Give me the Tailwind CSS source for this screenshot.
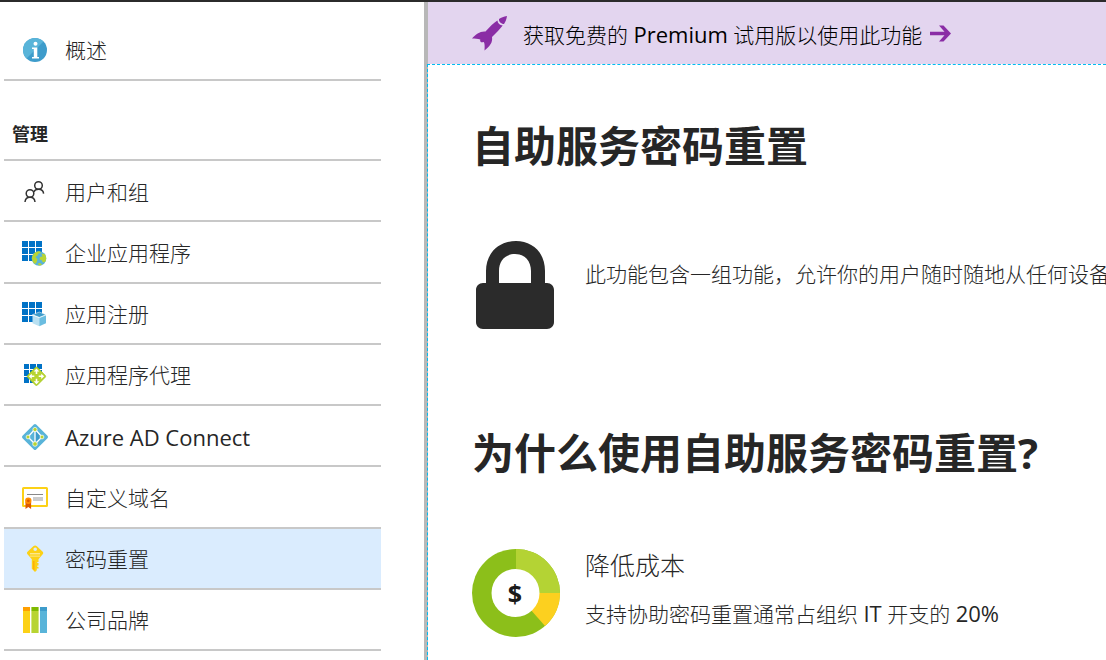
<!DOCTYPE html>
<html lang="zh-CN">
<head>
<meta charset="utf-8">
<meta name="viewport" content="width=device-width, initial-scale=1">
<title>自助服务密码重置</title>
<script src="https://cdn.jsdelivr.net/npm/@tailwindcss/browser@4"></script>
</head>
<body class="flex h-screen flex-col overflow-hidden border-t-2 border-[#2b2b2b] bg-white font-['Open_Sans','Noto_Sans_CJK_SC',sans-serif] text-[21px] leading-7 text-[#262626]">
<div class="flex min-h-0 flex-1">
  <nav aria-label="目录" class="w-[424px] shrink-0 overflow-hidden pl-1 pr-[43px] font-light">
    <a href="#" class="flex h-[79px] items-center gap-4 border-b-2 border-[#c8c8c8] pl-[17px] pt-[19px]">
      <svg class="size-7 shrink-0" viewBox="0 0 28 28" aria-hidden="true"><circle cx="14" cy="14" r="12" fill="#3e9ccb"/><path d="M5.500 22.500A12 12 0 0 1 22.500 5.500z" fill="#59b4d9"/><circle cx="14.500" cy="7.700" r="2" fill="#fff"/><path d="M11 11.500h5.300V21H18v1.600h-7V21h1.800v-7.900H11z" fill="#fff"/></svg>
      <span>概述</span>
    </a>
    <h2 class="flex h-20 items-end border-b-2 border-[#c8c8c8] pb-[11px] pl-2 text-lg leading-7 font-bold">管理</h2>
    <ul class="grid min-h-[490px] auto-rows-fr">
      <li class="border-b-2 border-[#c8c8c8]"><a href="#" class="flex h-full items-center gap-4 pl-[17px] pt-0.5">
        <svg class="size-7 shrink-0" viewBox="0 0 28 28" fill="none" stroke="#333" stroke-width="1.500" aria-hidden="true"><circle cx="17.500" cy="7.500" r="3.800"/><circle cx="9" cy="15.500" r="3.800"/><path d="M4 24c.3-3 2.200-4.700 5-4.700s4.700 1.700 5 4.700M12.800 14c.8-1.800 2.500-2.700 4.700-2.700 2.800 0 4.800 1.600 5.100 4.400"/></svg>
        <span>用户和组</span></a></li>
      <li class="border-b-2 border-[#c8c8c8]"><a href="#" class="flex h-full items-center gap-4 pl-[17px] pt-0.5">
        <svg class="size-7 shrink-0" viewBox="0 0 28 28" aria-hidden="true"><path fill="#0072c6" d="M1 2h6v6H1zm7 0h6v6H8zm7 0h6v6h-6zM1 9h6v6H1zm7 0h6v6H8zm7 0h6v6h-6zM1 16h6v6H1zm7 0h6v6H8z"/><circle cx="18" cy="19.500" r="7.300" fill="#59b4d9"/><path fill="#b8d432" d="M12.500 15c2-2.300 4.500-3 6.500-2.500l1 1.500-2.500.5-1 2-2 1.500 2 2.500-1 3-1.500 1.500c-2-1.500-3.500-4-3-7zM20.500 14.500l3.500.8c1.500 2.500 1.600 5 .3 7.500l-2.300.7-1.500-2.500-2-.5.5-2.500 2.500-.5zM17 24.500l2-.5 2 1.500-1.500 1-2-.2z"/></svg>
        <span>企业应用程序</span></a></li>
      <li class="border-b-2 border-[#c8c8c8]"><a href="#" class="flex h-full items-center gap-4 pl-[17px] pt-0.5">
        <svg class="size-7 shrink-0" viewBox="0 0 28 28" aria-hidden="true"><path fill="#0072c6" d="M1 2h6v6H1zm7 0h6v6H8zm7 0h6v6h-6zM1 9h6v6H1zm7 0h6v6H8zm7 0h6v6h-6zM1 16h6v6H1zm7 0h6v6H8z"/><path fill="#3e9ccb" stroke="#fff" stroke-width=".5" d="m18.300 12 6.700 2.700-6.700 2.700-6.800-2.700z"/><path fill="#b9e0f1" d="m11.500 15 6.800 2.700v8.500l-6.800-3z"/><path fill="#6bbde0" d="m25 15-6.700 2.700v8.500l6.700-3z"/><path fill="none" stroke="#fff" stroke-width=".6" d="m11.500 15 6.800 2.700L25 15"/></svg>
        <span>应用注册</span></a></li>
      <li class="border-b-2 border-[#c8c8c8]"><a href="#" class="flex h-full items-center gap-4 pl-[17px] pt-0.5">
        <svg class="size-7 shrink-0" viewBox="0 0 28 28" aria-hidden="true"><path fill="#0072c6" d="M3 3h5v5H3zm6 0h6v5H9zm7 0h5v5h-5zM3 9h5v6H3zm6 0h6v6H9zm7 0h5v6h-5zM3 16h5v6H3zm6 0h6v6H9z"/><path fill="#b8d432" stroke="#a2c617" stroke-width=".7" d="m14.600 6.300-8.100 8.200q-.7.900 0 1.700l8.100 8q.9.600 1.700 0l8-8q.7-.8 0-1.700l-8-8.200q-.8-.6-1.700 0z"/><path fill="#fff" d="m15.500 7.500 2.800 3h-2V13h-1.600v-2.500h-2zm0 15.700-2.800-3h2v-2.500h1.600v2.500h2zM7.800 15.300l3-2.600v1.900h2.500v1.500h-2.500V18zm15.400 0-3-2.600v1.900h-2.500v1.500h2.500V18z"/></svg>
        <span>应用程序代理</span></a></li>
      <li class="border-b-2 border-[#c8c8c8]"><a href="#" class="flex h-full items-center gap-4 pl-[17px] pt-0.5">
        <svg class="size-7 shrink-0" viewBox="0 0 28 28" aria-hidden="true"><path fill="#59b4d9" d="M12.800 1.500 1.500 12.800q-1.200 1.200 0 2.400l11.300 11.300q1.200 1.200 2.400 0l11.300-11.300q1.200-1.200 0-2.400L15.200 1.500q-1.200-1.200-2.400 0z"/><path fill="#3e9ccb" d="m14 7 7 7-7 7z"/><path fill="none" stroke="#fff" stroke-width="1.300" d="M14 6 7 14l7 7 7-7zM14 6v15"/><g fill="#b8d432" stroke="#fff" stroke-width=".7"><circle cx="14" cy="6.500" r="2.100"/><circle cx="7" cy="14" r="1.900"/><circle cx="21" cy="14" r="1.900"/><circle cx="14" cy="21" r="2.300"/></g></svg>
        <span class="text-[22px] font-normal">Azure AD Connect</span></a></li>
      <li class="border-b-2 border-[#c8c8c8]"><a href="#" class="flex h-full items-center gap-4 pl-[17px] pt-0.5">
        <svg class="size-7 shrink-0" viewBox="0 0 28 28" aria-hidden="true"><rect x="2" y="4" width="24" height="18" rx=".5" fill="#fff" stroke="#fcd116" stroke-width="2"/><path fill="#888" d="M6 10h16v1H6z"/><path fill="#ccc" d="M12 13h10v4H12z"/><path fill="#dd5900" d="M4.500 18h5.600v7l-2.800-2-2.800 2z"/><circle cx="7.300" cy="16.800" r="3.200" fill="#ff8c00"/><circle cx="7.300" cy="16.800" r="1.400" fill="#dd5900"/></svg>
        <span>自定义域名</span></a></li>
      <li class="border-b-2 border-[#c8c8c8] bg-[#daecfe]"><a href="#" aria-current="page" class="flex h-full items-center gap-4 pl-[17px] pt-0.5">
        <svg class="size-7 shrink-0" viewBox="0 0 28 28" aria-hidden="true"><path fill="#fcd116" fill-rule="evenodd" d="m12.300 1.300-5.800 5.500q-1 1.200 0 2.500l4.300 5v9.500l3.200 3.200 1.800-1.800v-1.700h1.700V22h-1.200v-1.500h1.200V18h-1.200v-1h1.200v-2.700l4.200-5q1-1.300 0-2.500l-5.800-5.500q-1.800-1.400-3.600 0zM14.200 2.500a1.800 1.800 0 1 1 0 3.600 1.800 1.800 0 0 1 0-3.600z"/><path fill="#fff" opacity=".5" d="M9 8h10v1.400H9z"/><path fill="#fff" opacity=".35" d="M9 10.500h10v1.400H9z"/><path fill="#ff9a00" opacity=".6" d="M12 16h1.500v9.500L12 24z"/></svg>
        <span>密码重置</span></a></li>
      <li class="border-b-2 border-[#c8c8c8]"><a href="#" class="flex h-full items-center gap-4 pl-[17px] pt-0.5">
        <svg class="size-7 shrink-0" viewBox="0 0 28 28" aria-hidden="true"><path fill="#fcd116" d="M2 1h7v26H2z"/><path fill="#ff9f00" d="M2 1h7v4H2z"/><path fill="#b8d432" d="M10 1h8v26h-8z"/><path fill="#7fba00" d="M10 1h8v4h-8z"/><path fill="#59b4d9" d="M19 1h7v26h-7z"/><path fill="#3e9ccb" d="M19 1h7v4h-7z"/><path fill="#fff" opacity=".4" d="M10 1h1v26h-1zm7 0h1v26h-1z"/></svg>
        <span>公司品牌</span></a></li>
    </ul>
  </nav>
  <div class="w-1 shrink-0 bg-[#b8b8b8]"></div>
  <main class="-ml-px flex min-w-0 flex-1 flex-col">
    <a href="#" class="ml-px flex h-[62px] shrink-0 items-center bg-[#e3d5ef] pl-[43px] text-black">
      <svg class="mr-3.5 size-[38px] shrink-0" viewBox="0 0 38 38" aria-hidden="true"><g fill="#8a2da5"><path d="M36 2c-3.300.6-6 1.700-8 3.100-.4 2.600 2 5 5 5C34.500 8 35.500 5 36 2z"/><path d="M26.400 6.500C23 8.500 18.500 13 14.500 17.500 9 17 5 20 1 24.500c3 0 5.500 0 8.300 1-.7 2.200 1 3.500 3.200 2.500 1.300.5 1.300 5 1 8.500 5-4 8.500-8 7.500-13.500 4-3.700 8.400-8.200 10.700-11.400-2.900-.3-4.900-2.200-5.300-5.100z"/></g></svg>
      <span class="pt-0.5 font-light whitespace-nowrap">获取免费的 <span class="text-[22px] font-normal">Premium</span> 试用版以使用此功能</span>
      <svg class="ml-[7px] h-[18px] w-[22px] shrink-0" viewBox="0 0 22 18" aria-hidden="true"><path fill="#8a2da5" d="M1 7.800h14.500L10 1.500h4.500L22 9.500l-7.500 8H10l5.500-6.300H1z"/></svg>
    </a>
    <div class="flex-1 border-t border-l border-dashed border-[#00bcf2] pl-11 font-light">
      <h1 class="pt-[50px] text-[42px] leading-[62px] font-bold">自助服务密码重置</h1>
      <section class="flex gap-[25px] pt-[63px]">
        <svg class="h-[90px] w-[88px] shrink-0" viewBox="0 0 88 90" fill="#2b2b2b" aria-hidden="true"><path fill-rule="evenodd" d="M14 43V31C14 12 28 1 44 1s29 11 29 30v12h2c4 0 7 3 7 7v32c0 4-3 7-7 7H11c-4 0-7-3-7-7V50c0-4 3-7 7-7zm13 0h32V31c0-10-6-17-16-17s-16 7-16 17z"/></svg>
        <p class="pt-5 whitespace-nowrap">此功能包含一组功能，允许你的用户随时随地从任何设备重置其密码。</p>
      </section>
      <h2 class="pt-[92px] text-[42px] leading-[62px] font-bold whitespace-nowrap">为什么使用自助服务密码重置?</h2>
      <section class="flex gap-[25px] pt-[65px]">
        <svg class="size-[88px] shrink-0" viewBox="0 0 88 88" aria-hidden="true"><circle cx="44" cy="44" r="44" fill="#8cbf1a"/><path d="M44 44V0a44 44 0 0 1 44 44z" fill="#b4d334"/><path d="M44 44h44a44 44 0 0 1-15 33z" fill="#fcd01f"/><circle cx="43.500" cy="44" r="24" fill="#fff"/><text x="43" y="54" text-anchor="middle" class="text-[25px] font-bold" fill="#1a1a1a">$</text></svg>
        <div class="whitespace-nowrap">
          <h3 class="text-[25px] leading-8">降低成本</h3>
          <p class="pt-[18px]">支持协助密码重置通常占组织 <span class="text-[22px] font-normal">IT</span> 开支的 <span class="text-[22px] font-normal">20%</span></p>
        </div>
      </section>
    </div>
  </main>
</div>
</body>
</html>
